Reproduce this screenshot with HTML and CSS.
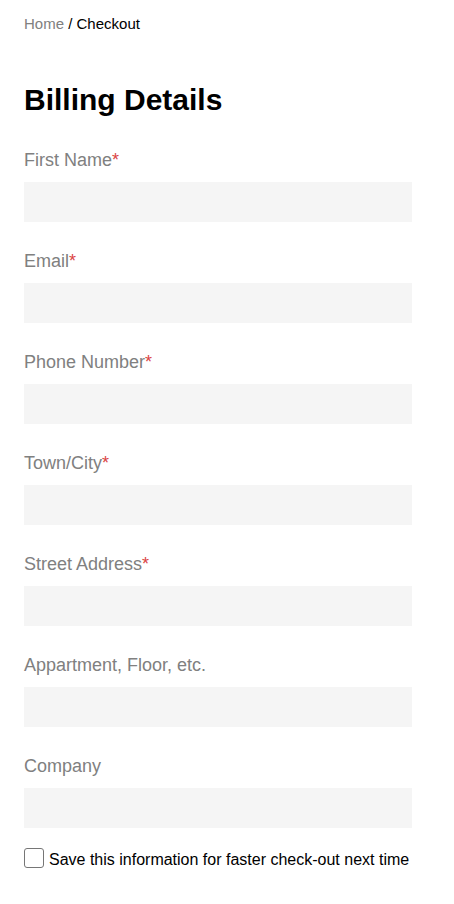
FILE: index.html
```html
<!DOCTYPE html>
<html lang="en">
<head>
<meta charset="utf-8">
<title>Checkout</title>
<link rel="stylesheet" href="styles.css">
</head>
<body>
<main class="page">
  <nav class="crumbs"><span class="crumb-muted">Home</span> / <span>Checkout</span></nav>
  <h1 class="title">Billing Details</h1>
  <form class="form">
    <div class="field">
      <label class="label">First Name<span class="req">*</span></label>
      <input class="input" type="text">
    </div>
    <div class="field">
      <label class="label">Email<span class="req">*</span></label>
      <input class="input" type="text">
    </div>
    <div class="field">
      <label class="label">Phone Number<span class="req">*</span></label>
      <input class="input" type="text">
    </div>
    <div class="field">
      <label class="label">Town/City<span class="req">*</span></label>
      <input class="input" type="text">
    </div>
    <div class="field">
      <label class="label">Street Address<span class="req">*</span></label>
      <input class="input" type="text">
    </div>
    <div class="field">
      <label class="label">Appartment, Floor, etc.</label>
      <input class="input" type="text">
    </div>
    <div class="field">
      <label class="label">Company</label>
      <input class="input" type="text">
    </div>
    <label class="save">
      <input class="check" type="checkbox">
      <span class="save-text">Save this information for faster check-out next time</span>
    </label>
  </form>
</main>
</body>
</html>
```

FILE: styles.css
```css
* { box-sizing: border-box; }
html, body { margin: 0; padding: 0; background: #fff; }
body { font-family: "Liberation Sans", Arial, sans-serif; color: #000; }
.page { padding: 15px 24px 0 24px; }
.crumbs { font-size: 15px; line-height: 18px; color: #000; }
.crumb-muted { color: #808080; }
.title { margin: 49px 0 0 0; font-size: 30px; line-height: 36px; font-weight: 700; }
.form { display: flex; flex-direction: column; margin-top: 31px; }
.field { display: flex; flex-direction: column; margin-bottom: 28px; }
.field:last-of-type { margin-bottom: 20px; }
.label { font-size: 18px; line-height: 22px; color: #808080; margin-bottom: 11px; }
.req { color: #db4444; }
.input { width: 388px; height: 40px; border: none; background: #f5f5f5; border-radius: 0; margin: 0; padding: 0 12px; outline: none; font: inherit; }
.save { display: flex; align-items: flex-start; gap: 5px; }
.check { appearance: none; -webkit-appearance: none; width: 20px; height: 20px; margin: 0; border: 1px solid #767676; border-radius: 3px; background: #fff; flex: none; }
.save-text { font-size: 16px; line-height: 20px; padding-top: 2px; color: #000; }
```
